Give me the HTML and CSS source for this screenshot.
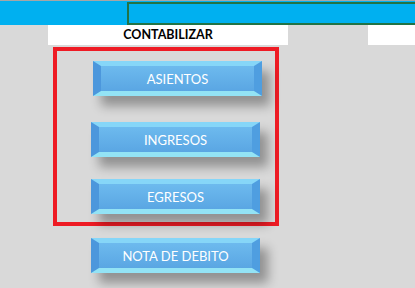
FILE: index.html
```html
<!DOCTYPE html>
<html lang="es">
<head>
<meta charset="utf-8">
<link rel="stylesheet" href="styles.css">
</head>
<body>
<div class="topbar">
  <div class="topbar-left"></div>
  <div class="topbar-cell"></div>
</div>
<div class="row2">
  <div class="cell-title">CONTABILIZAR</div>
  <div class="cell-gap"></div>
  <div class="cell-white"></div>
</div>
<div class="sheet">
  <div class="redbox">
    <div class="btn btn-first">ASIENTOS</div>
    <div class="btn btn-second">INGRESOS</div>
    <div class="btn btn-third">EGRESOS</div>
  </div>
  <div class="btn btn-nota">NOTA DE DEBITO</div>
</div>
</body>
</html>
```

FILE: styles.css
```css
html, body {
  margin: 0;
  padding: 0;
}
body {
  width: 415px;
  height: 288px;
  overflow: hidden;
  background: #d9d9d9;
  font-family: Lato, "Open Sans", "Liberation Sans", sans-serif;
}
.topbar {
  display: flex;
  height: 24px;
  border-top: 1px solid #a6a6a6;
  background: #00b0f0;
}
.topbar-left {
  width: 127px;
}
.topbar-cell {
  flex: 1;
  margin-top: 1px;
  border: 2px solid #217346;
  border-right: none;
  background: #00b0f0;
}
.row2 {
  display: flex;
  height: 20px;
}
.cell-title {
  margin-left: 48px;
  width: 240px;
  background: #ffffff;
  color: #000;
  font-weight: 700;
  font-size: 12.5px;
  text-align: center;
  line-height: 20px;
}
.cell-gap {
  width: 80px;
}
.cell-white {
  flex: 1;
  background: #ffffff;
}
.sheet {
  padding-top: 2px;
}
.redbox {
  margin-left: 53px;
  width: 218px;
  border: 4px solid #ee1b24;
  padding: 10px 0 8px 0;
  display: flex;
  flex-direction: column;
  gap: 26px;
}
.btn {
  box-sizing: border-box;
  width: 169px;
  height: 35px;
  border-style: solid;
  border-width: 5px 8px 5px 8px;
  border-color: #86d6f8 #4f9ee0 #93e3f5 #4c97dc;
  background: linear-gradient(#6dbaee, #5aa6e3);
  color: #ffffff;
  font-size: 13px;
  text-align: center;
  line-height: 26px;
  box-shadow: 8px 10px 10px rgba(0, 0, 0, 0.33);
}
.btn-first {
  margin-left: 36px;
}
.btn-second {
  margin-left: 34px;
}
.btn-third {
  margin-left: 34px;
  margin-top: -4px;
}
.btn-nota {
  margin-left: 91px;
  margin-top: 12px;
}
```
